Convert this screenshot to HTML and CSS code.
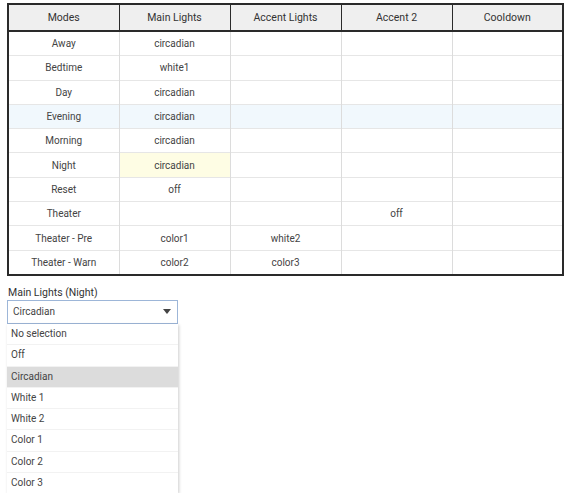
FILE: index.html
```html
<!DOCTYPE html>
<html>
<head>
<meta charset="utf-8">
<link rel="stylesheet" href="styles.css">
</head>
<body>
<table class="grid">
  <thead>
    <tr><th>Modes</th><th>Main Lights</th><th>Accent Lights</th><th>Accent 2</th><th>Cooldown</th></tr>
  </thead>
  <tbody>
    <tr><td>Away</td><td>circadian</td><td></td><td></td><td></td></tr>
    <tr><td>Bedtime</td><td>white1</td><td></td><td></td><td></td></tr>
    <tr><td>Day</td><td>circadian</td><td></td><td></td><td></td></tr>
    <tr class="hover"><td>Evening</td><td>circadian</td><td></td><td></td><td></td></tr>
    <tr><td>Morning</td><td>circadian</td><td></td><td></td><td></td></tr>
    <tr><td>Night</td><td class="active">circadian</td><td></td><td></td><td></td></tr>
    <tr><td>Reset</td><td>off</td><td></td><td></td><td></td></tr>
    <tr><td>Theater</td><td></td><td></td><td>off</td><td></td></tr>
    <tr><td>Theater - Pre</td><td>color1</td><td>white2</td><td></td><td></td></tr>
    <tr><td>Theater - Warn</td><td>color2</td><td>color3</td><td></td><td></td></tr>
  </tbody>
</table>
<div class="field">
  <div class="label">Main Lights (Night)</div>
  <div class="select">
    <span>Circadian</span>
    <svg class="caret" width="8" height="5" viewBox="0 0 8 5"><path d="M0 0h8L4 5z" fill="#444"/></svg>
  </div>
  <ul class="menu">
    <li>No selection</li>
    <li>Off</li>
    <li class="sel">Circadian</li>
    <li>White 1</li>
    <li>White 2</li>
    <li>Color 1</li>
    <li>Color 2</li>
    <li>Color 3</li>
  </ul>
</div>
</body>
</html>
```
FILE: styles.css
```css
body {
  margin: 0;
  padding: 3px 9px 0 7px;
  font-family: Roboto, "Liberation Sans", sans-serif;
  color: #333;
  background: #fff;
}
.grid {
  width: 557px;
  border-collapse: collapse;
  border: 2px solid #2a2a2a;
  table-layout: fixed;
  font-size: 10px;
}
.grid th {
  height: 25px;
  background: #efefef;
  font-weight: normal;
  font-size: 10.5px;
  color: #333;
  border-left: 1px solid #2a2a2a;
  border-bottom: 2px solid #2a2a2a;
  padding: 0;
}
.grid td {
  height: 23.3px;
  padding: 0;
  text-align: center;
  color: #444;
  border-left: 1px solid #dcdcdc;
  border-top: 1px solid #e6e6e6;
}
.grid th:first-child, .grid td:first-child { border-left: none; }
.grid tbody tr:first-child td { border-top: none; }
.grid tr.hover td { background: #f1f8fd; }
.grid td.active { background: #fefde4; }
.field { margin-top: 10px; width: 171px; }
.label { font-size: 10.5px; color: #333; margin-left: 1px; margin-bottom: 1px; }
.select {
  height: 22px;
  border: 1px solid #9db6d8;
  display: flex;
  align-items: center;
  justify-content: space-between;
  padding: 0 5px 0 5px;
  font-size: 10px;
  color: #444;
}
.caret { margin-right: 1px; }
.menu {
  list-style: none;
  margin: 0;
  padding: 0;
  box-shadow: 1px 1px 3px rgba(0,0,0,0.2);
  font-size: 10px;
  color: #444;
}
.menu li {
  height: 20.3px;
  line-height: 20px;
  padding-left: 4px;
  border-bottom: 1px solid #f2f2f2;
}
.menu li:last-child { border-bottom: none; }
.menu li.sel { background: #dcdcdc; }
```
